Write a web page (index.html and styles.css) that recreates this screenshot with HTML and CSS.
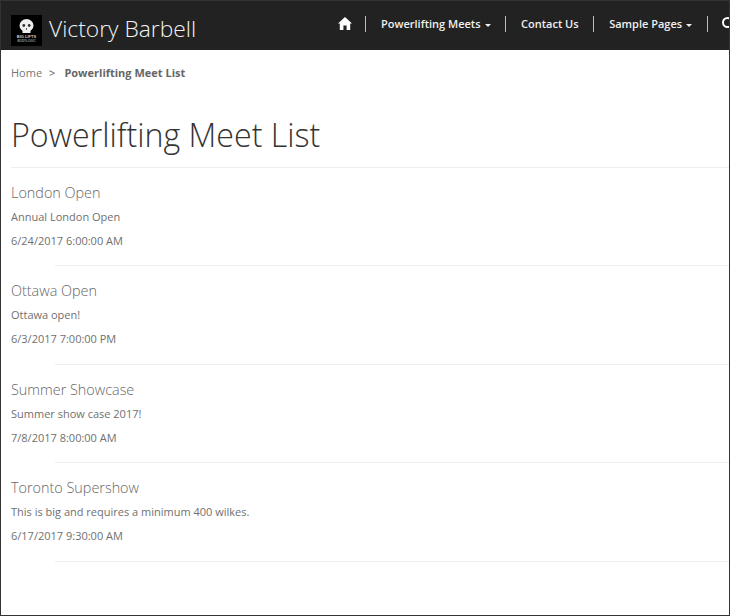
FILE: index.html
```html
<!DOCTYPE html>
<html lang="en">
<head>
<meta charset="utf-8">
<title>Powerlifting Meet List</title>
<link rel="stylesheet" href="styles.css">
</head>
<body>
<div class="frame">
  <header class="navbar">
    <a class="brand">
      <svg class="logo" width="31" height="31" viewBox="0 0 31 31" aria-hidden="true">
        <rect width="31" height="31" fill="#000"/>
        <ellipse cx="15.5" cy="10.5" rx="7" ry="6.5" fill="#eee"/>
        <rect x="11.5" y="13" width="8" height="5" fill="#eee"/>
        <circle cx="12.8" cy="10.5" r="1.4" fill="#333"/>
        <circle cx="18.2" cy="10.5" r="1.4" fill="#333"/>
        <rect x="15" y="13" width="1" height="2" fill="#666"/>
        <text class="logo-text" x="15.5" y="23">BIG LIFTS</text>
        <text class="logo-text small" x="15.5" y="26.5">BODYLOGIC</text>
      </svg>
      <span class="brand-name">Victory Barbell</span>
    </a>
    <nav class="menu">
      <a class="item home">
        <svg width="14" height="13" viewBox="0 0 14 13" aria-hidden="true"><path d="M7 0 L14 6.6 L12.2 6.6 L12.2 13 L8.6 13 L8.6 8.6 L5.4 8.6 L5.4 13 L1.8 13 L1.8 6.6 L0 6.6 Z" fill="#fff"/></svg>
      </a>
      <a class="item">Powerlifting Meets<span class="caret"></span></a>
      <a class="item">Contact Us</a>
      <a class="item">Sample Pages<span class="caret"></span></a>
      <a class="item search">
        <svg width="14" height="14" viewBox="0 0 14 14" aria-hidden="true"><circle cx="5.5" cy="5.5" r="4.5" fill="none" stroke="#fff" stroke-width="2"/><path d="M9 9 L13 13" stroke="#fff" stroke-width="2"/></svg>
      </a>
    </nav>
  </header>
  <main class="content">
    <ol class="crumbs">
      <li>Home</li>
      <li class="sep">&gt;</li>
      <li class="current">Powerlifting Meet List</li>
    </ol>
    <h1 class="title">Powerlifting Meet List</h1>
    <ul class="meets">
      <li class="meet">
        <h2 class="meet-name">London Open</h2>
        <p class="meet-text">Annual London Open</p>
        <p class="meet-text">6/24/2017 6:00:00 AM</p>
      </li>
      <li class="meet">
        <h2 class="meet-name">Ottawa Open</h2>
        <p class="meet-text">Ottawa open!</p>
        <p class="meet-text">6/3/2017 7:00:00 PM</p>
      </li>
      <li class="meet">
        <h2 class="meet-name">Summer Showcase</h2>
        <p class="meet-text">Summer show case 2017!</p>
        <p class="meet-text">7/8/2017 8:00:00 AM</p>
      </li>
      <li class="meet">
        <h2 class="meet-name">Toronto Supershow</h2>
        <p class="meet-text">This is big and requires a minimum 400 wilkes.</p>
        <p class="meet-text">6/17/2017 9:30:00 AM</p>
      </li>
    </ul>
  </main>
</div>
</body>
</html>
```
FILE: styles.css
```css
* { box-sizing: border-box; }
html, body { margin: 0; padding: 0; background: #fff; }
body { font-family: "Open Sans", "Liberation Sans", sans-serif; color: #666; }
.frame {
  width: 730px;
  height: 616px;
  border: 1px solid #333;
  overflow: hidden;
}
.navbar {
  height: 49px;
  background: #222;
  display: flex;
  align-items: center;
  justify-content: space-between;
  padding-left: 10px;
  white-space: nowrap;
  overflow: hidden;
}
.brand { display: flex; align-items: center; gap: 7px; padding-top: 10px; }
.logo { display: block; }
.logo-text {
  font-family: "Liberation Sans", sans-serif;
  font-size: 4px;
  font-weight: 700;
  fill: #ccc;
  text-anchor: middle;
}
.logo-text.small { font-size: 3px; fill: #999; }
.brand-name { font-size: 22.8px; font-weight: 300; color: #f2f2f2; margin-top: -4px; }
.menu {
  display: flex;
  align-items: center;
  flex: none;
  width: 391px;
  margin-top: -3px;
  overflow: hidden;
}
.item {
  flex: none;
  font-size: 11px;
  font-weight: 600;
  color: #f0f0f0;
  line-height: 16px;
  padding: 0 14.5px 0 15px;
  border-right: 1px solid #bbb;
}
.home { padding: 0 13px 0 0; display: flex; align-items: center; height: 16px; }
.home svg { margin-top: -2px; }
.search { border-right: 0; padding: 0; margin-left: 14.5px; height: 14px; line-height: 0; }
.caret {
  display: inline-block;
  margin-left: 4px;
  vertical-align: middle;
  border-top: 3px solid #f0f0f0;
  border-left: 3px solid transparent;
  border-right: 3px solid transparent;
}
.content { padding-top: 13px; }
.crumbs {
  list-style: none;
  margin: 0 0 0 10px;
  padding: 0;
  display: flex;
  gap: 7px;
  font-size: 11px;
  line-height: 20px;
  color: #777;
}
.current { font-weight: 700; color: #666; margin-left: 2px; }
.sep { color: #555; }
.title {
  margin: 29px 0 0 10px;
  padding-bottom: 10px;
  border-bottom: 1px solid #eee;
  font-size: 32.2px;
  line-height: 45px;
  font-weight: 300;
  color: #333;
}
.meets { list-style: none; margin: 0; padding: 0; }
.meet { position: relative; padding: 13px 0 14px 10px; height: 98.4px; }
.meet::after {
  content: "";
  position: absolute;
  left: 54px;
  right: 0;
  bottom: 0;
  height: 1px;
  background: #eee;
}
.meet-name {
  margin: 0;
  font-size: 14.4px;
  line-height: 24px;
  font-weight: 300;
  color: #666;
}
.meet-text {
  margin: 0;
  font-size: 11px;
  line-height: 24px;
  color: #707070;
}
```
